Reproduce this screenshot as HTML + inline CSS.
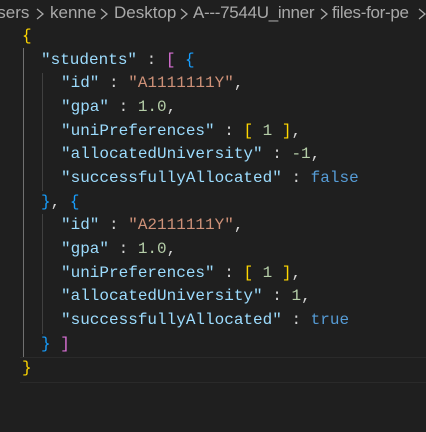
<!DOCTYPE html><html><head><style>
body{margin:0;width:426px;height:432px;background:#1f1f1f;overflow:hidden;position:relative;font-family:"Liberation Mono",monospace}
.bc{position:absolute;top:0;left:0;width:426px;height:26px;overflow:hidden;font:17px "Liberation Sans",sans-serif;color:#a9a9a9;white-space:pre;line-height:24px}
.bc span{position:absolute;top:1px}
.bc svg{position:absolute;top:8px}
.l{position:absolute;font-size:16px;line-height:20px;white-space:pre;color:#d4d4d4}
.k{color:#9cdcfe}.s{color:#ce9178}.n{color:#b5cea8}.b{color:#569cd6}.y{color:#ffd700}.m{color:#da70d6}.u{color:#179fff}
.g{position:absolute;width:1px;background:#404040}
</style></head><body>
<div class="bc">
<span style="left:-15px">Users</span>
<svg style="left:36px" width="8" height="12"><path d="M1 1l6 5-6 5" stroke="#a9a9a9" stroke-width="1.3" fill="none"/></svg>
<span style="left:50px">kenne</span>
<svg style="left:100px" width="8" height="12"><path d="M1 1l6 5-6 5" stroke="#a9a9a9" stroke-width="1.3" fill="none"/></svg>
<span style="left:114px">Desktop</span>
<svg style="left:180px" width="8" height="12"><path d="M1 1l6 5-6 5" stroke="#a9a9a9" stroke-width="1.3" fill="none"/></svg>
<span style="left:193px;letter-spacing:-0.3px">A---7544U_inner</span>
<svg style="left:320px" width="8" height="12"><path d="M1 1l6 5-6 5" stroke="#a9a9a9" stroke-width="1.3" fill="none"/></svg>
<span style="left:332px;letter-spacing:-0.3px">files-for-pe</span>
<svg style="left:418px" width="8" height="12"><path d="M1 1l6 5-6 5" stroke="#a9a9a9" stroke-width="1.3" fill="none"/></svg>
</div>
<div class="g" style="left:23px;top:48px;height:310px;background:#707070"></div>
<div class="g" style="left:42px;top:73px;height:118px"></div>
<div class="g" style="left:42px;top:214px;height:120px"></div>
<div style="position:absolute;left:20px;top:357px;width:406px;height:24px;border-top:1px solid #2a2a2a;border-bottom:1px solid #2a2a2a"></div>
<div class="l" style="left:22px;top:26px"><span class="y">{</span></div>
<div class="l" style="left:41px;top:50px"><span class="k">"students"</span> : <span class="m">[</span> <span class="u">{</span></div>
<div class="l" style="left:61px;top:73px"><span class="k">"id"</span> : <span class="s">"A1111111Y"</span>,</div>
<div class="l" style="left:61px;top:97px"><span class="k">"gpa"</span> : <span class="n">1.0</span>,</div>
<div class="l" style="left:61px;top:121px"><span class="k">"uniPreferences"</span> : <span class="y">[</span> <span class="n">1</span> <span class="y">]</span>,</div>
<div class="l" style="left:61px;top:144px"><span class="k">"allocatedUniversity"</span> : <span class="n">-1</span>,</div>
<div class="l" style="left:61px;top:168px"><span class="k">"successfullyAllocated"</span> : <span class="b">false</span></div>
<div class="l" style="left:41px;top:192px"><span class="u">}</span>, <span class="u">{</span></div>
<div class="l" style="left:61px;top:215px"><span class="k">"id"</span> : <span class="s">"A2111111Y"</span>,</div>
<div class="l" style="left:61px;top:239px"><span class="k">"gpa"</span> : <span class="n">1.0</span>,</div>
<div class="l" style="left:61px;top:263px"><span class="k">"uniPreferences"</span> : <span class="y">[</span> <span class="n">1</span> <span class="y">]</span>,</div>
<div class="l" style="left:61px;top:286px"><span class="k">"allocatedUniversity"</span> : <span class="n">1</span>,</div>
<div class="l" style="left:61px;top:310px"><span class="k">"successfullyAllocated"</span> : <span class="b">true</span></div>
<div class="l" style="left:41px;top:334px"><span class="u">}</span> <span class="m">]</span></div>
<div class="l" style="left:22px;top:358px"><span class="y">}</span></div>
</body></html>
